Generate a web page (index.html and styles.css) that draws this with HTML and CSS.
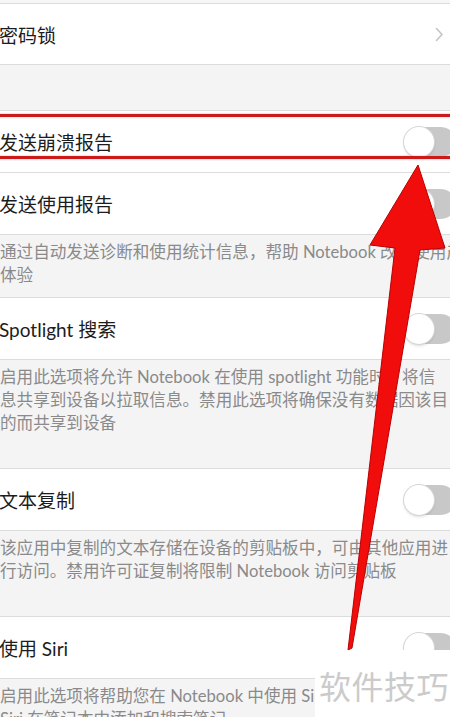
FILE: index.html
```html
<!DOCTYPE html>
<html lang="zh-CN">
<head>
  <meta charset="UTF-8">
  <meta name="viewport" content="width=device-width, initial-scale=1.0">
  <title>Notebook 设置</title>
  <link rel="stylesheet" href="styles.css">
</head>
<body>
  <div class="page">
    <div class="top-strip"></div>

    <div class="group">
      <div class="row row-first">
        <span class="title">密码锁</span>
        <svg class="chevron" width="9" height="15" viewBox="0 0 9 15">
          <path d="M1.5 1.5 L7 7.5 L1.5 13.5" fill="none" stroke="#c4c4c6" stroke-width="1.6" stroke-linecap="round" stroke-linejoin="round"/>
        </svg>
      </div>
    </div>

    <div class="gap"></div>

    <div class="group">
      <div class="row">
        <span class="title">发送崩溃报告</span>
        <span class="switch"><span class="knob"></span></span>
      </div>
      <div class="row">
        <span class="title">发送使用报告</span>
        <span class="switch"><span class="knob"></span></span>
      </div>
    </div>
    <p class="note">通过自动发送诊断和使用统计信息，帮助 Notebook 改进使用产品<br>体验</p>

    <div class="group">
      <div class="row">
        <span class="title">Spotlight 搜索</span>
        <span class="switch"><span class="knob"></span></span>
      </div>
    </div>
    <p class="note note-end">启用此选项将允许 Notebook 在使用 spotlight 功能时，将信<br>息共享到设备以拉取信息。禁用此选项将确保没有数据因该目<br>的而共享到设备</p>

    <div class="group">
      <div class="row">
        <span class="title">文本复制</span>
        <span class="switch"><span class="knob"></span></span>
      </div>
    </div>
    <p class="note note-end">该应用中复制的文本存储在设备的剪贴板中，可由其他应用进<br>行访问。禁用许可证复制将限制 Notebook 访问剪贴板</p>

    <div class="group">
      <div class="row">
        <span class="title">使用 Siri</span>
        <span class="switch"><span class="knob"></span></span>
      </div>
    </div>
    <p class="note note-end">启用此选项将帮助您在 Notebook 中使用 Siri，<br>Siri 在笔记本中添加和搜索笔记</p>
  </div>

  <!-- annotation on top of the screenshot -->
  <div class="highlight"></div>
  <svg class="arrow" width="450" height="717" viewBox="0 0 450 717">
    <polygon points="418,165 445,248 420,250 352,648 348,650 395,248 370,245" fill="#f20d0d" stroke="#b80000" stroke-width="1" stroke-linejoin="round"/>
  </svg>
  <div class="watermark">软件技巧</div>
</body>
</html>
```

FILE: styles.css
```css
body {
  margin: 0;
  width: 450px;
  height: 717px;
  overflow: hidden;
  position: relative;
  background: #f4f4f5;
  font-family: 'Lato', 'Noto Sans CJK SC', sans-serif;
  color: #1c1c1c;
}

.page {
  width: 456px;
}

.top-strip {
  height: 3px;
  background: #f6f6f6;
}

.group {
  background: #ffffff;
  border-top: 1px solid #dcdcdc;
  border-bottom: 1px solid #dcdcdc;
}

.row {
  display: flex;
  align-items: center;
  justify-content: space-between;
  height: 61px;
  padding: 0 12px 0 0;
}

.row-first {
  height: 60px;
}

.row + .row {
  border-top: 1px solid #dcdcdc;
}

.title {
  font-size: 19px;
  margin-left: -1px;
  white-space: nowrap;
}

.chevron {
  display: block;
}

.gap {
  height: 45px;
}

.note {
  margin: 0;
  padding: 6px 0 10px;
  font-size: 16.6px;
  line-height: 23px;
  color: #8a8a8a;
  white-space: nowrap;
}

.note-end {
  padding-bottom: 33px;
}

.switch {
  position: relative;
  display: block;
  width: 52px;
  height: 30px;
  margin-right: -12px;
  border-radius: 15px;
  background: #c8c8c8;
}

.knob {
  position: absolute;
  left: 0;
  top: 0;
  width: 30px;
  height: 30px;
  border-radius: 50%;
  background: #ffffff;
  box-shadow: 0 0 0 1px #d6d6d6, 0 2px 3px rgba(0, 0, 0, 0.15);
}

.highlight {
  position: absolute;
  left: -10px;
  right: -10px;
  top: 114px;
  height: 39px;
  border: 3px solid #cc1a1a;
  box-shadow: 0 0 2px #f3a0a0, inset 0 0 2px #f3a0a0;
}

.arrow {
  position: absolute;
  left: 0;
  top: 0;
  pointer-events: none;
}

.watermark {
  position: absolute;
  left: 315px;
  top: 650px;
  width: 140px;
  height: 70px;
  padding-left: 4px;
  background: #ffffff;
  font-family: 'Noto Sans CJK SC', sans-serif;
  font-size: 32px;
  line-height: 70px;
  letter-spacing: 0.5px;
  color: #cbcbcb;
  white-space: nowrap;
}
```
